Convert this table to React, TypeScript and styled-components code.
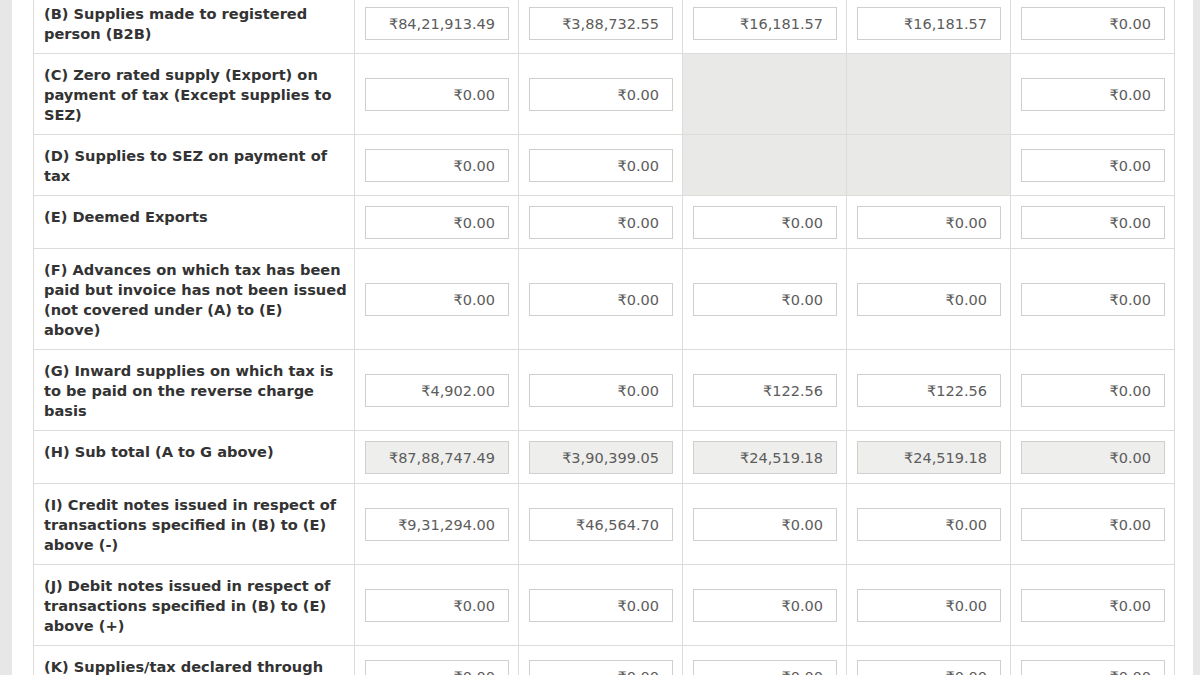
import React from 'react';
import styled, { createGlobalStyle } from 'styled-components';

type Cell = string | null; // null => greyed out, no input

type Row = {
    label: string[];
    values: Cell[];
    total?: boolean;
};

const zeros: Cell[] = ['₹0.00', '₹0.00', '₹0.00', '₹0.00', '₹0.00'];

const rows: Row[] = [
    { label: ['(B) Supplies made to registered', 'person (B2B)'], values: ['₹84,21,913.49', '₹3,88,732.55', '₹16,181.57', '₹16,181.57', '₹0.00'] },
    { label: ['(C) Zero rated supply (Export) on', 'payment of tax (Except supplies to', 'SEZ)'], values: ['₹0.00', '₹0.00', null, null, '₹0.00'] },
    { label: ['(D) Supplies to SEZ on payment of', 'tax'], values: ['₹0.00', '₹0.00', null, null, '₹0.00'] },
    { label: ['(E) Deemed Exports'], values: zeros },
    { label: ['(F) Advances on which tax has been', 'paid but invoice has not been issued', '(not covered under (A) to (E)', 'above)'], values: zeros },
    { label: ['(G) Inward supplies on which tax is', 'to be paid on the reverse charge', 'basis'], values: ['₹4,902.00', '₹0.00', '₹122.56', '₹122.56', '₹0.00'] },
    { label: ['(H) Sub total (A to G above)'], values: ['₹87,88,747.49', '₹3,90,399.05', '₹24,519.18', '₹24,519.18', '₹0.00'], total: true },
    { label: ['(I) Credit notes issued in respect of', 'transactions specified in (B) to (E)', 'above (-)'], values: ['₹9,31,294.00', '₹46,564.70', '₹0.00', '₹0.00', '₹0.00'] },
    { label: ['(J) Debit notes issued in respect of', 'transactions specified in (B) to (E)', 'above (+)'], values: zeros },
    { label: ['(K) Supplies/tax declared through', 'Amendments (+)'], values: zeros },
];

const GlobalStyle = createGlobalStyle`
    html, body {
        margin: 0;
        padding: 0;
        height: 675px;
        overflow: hidden;
        background: #e6e7e6;
    }
`;

const Panel = styled.div`
    margin-left: 12px;
    width: 1181px;
    height: 675px;
    box-sizing: border-box;
    padding: 0 19px 0 21px;
    background: #fff;
    overflow: hidden;
`;

const Table = styled.table`
    width: 1141px;
    margin-top: -8px;
    table-layout: fixed;
    border-collapse: collapse;
    font-family: "DejaVu Sans", Verdana, sans-serif;
`;

const Label = styled.td`
    box-sizing: border-box;
    width: 321px;
    border: 1px solid #dcdcdb;
    padding: 11px 4px 9px 10px;
    vertical-align: top;
    font-size: 14.6px;
    line-height: 20px;
    font-weight: bold;
    color: #333;
`;

const Line = styled.span`
    display: block;
    white-space: nowrap;
`;

const ValueCell = styled.td<{ $disabled?: boolean }>`
    box-sizing: border-box;
    width: 164px;
    border: 1px solid #dcdcdb;
    padding: 10px 9px 9px 10px;
    vertical-align: middle;
    background: ${p => (p.$disabled ? '#e9e9e7' : '#fff')};
`;

const Amount = styled.div<{ $readOnly?: boolean }>`
    box-sizing: border-box;
    height: 33px;
    border: 1px solid #cfcfcd;
    background: ${p => (p.$readOnly ? '#eeeeec' : '#fff')};
    padding: 2px 13px 0 6px;
    text-align: right;
    font-size: 14.5px;
    line-height: 29px;
    color: #5c5c5c;
    white-space: nowrap;
`;

export default function App() {
    return (
        <>
            <GlobalStyle />
            <Panel>
                <Table>
                    <tbody>
                        {rows.map((row, i) => (
                            <tr key={i}>
                                <Label>
                                    {row.label.map((l, k) => <Line key={k}>{l}</Line>)}
                                </Label>
                                {row.values.map((v, j) =>
                                    v === null ? (
                                        <ValueCell key={j} $disabled />
                                    ) : (
                                        <ValueCell key={j}>
                                            <Amount $readOnly={row.total}>{v}</Amount>
                                        </ValueCell>
                                    )
                                )}
                            </tr>
                        ))}
                    </tbody>
                </Table>
            </Panel>
        </>
    );
}
